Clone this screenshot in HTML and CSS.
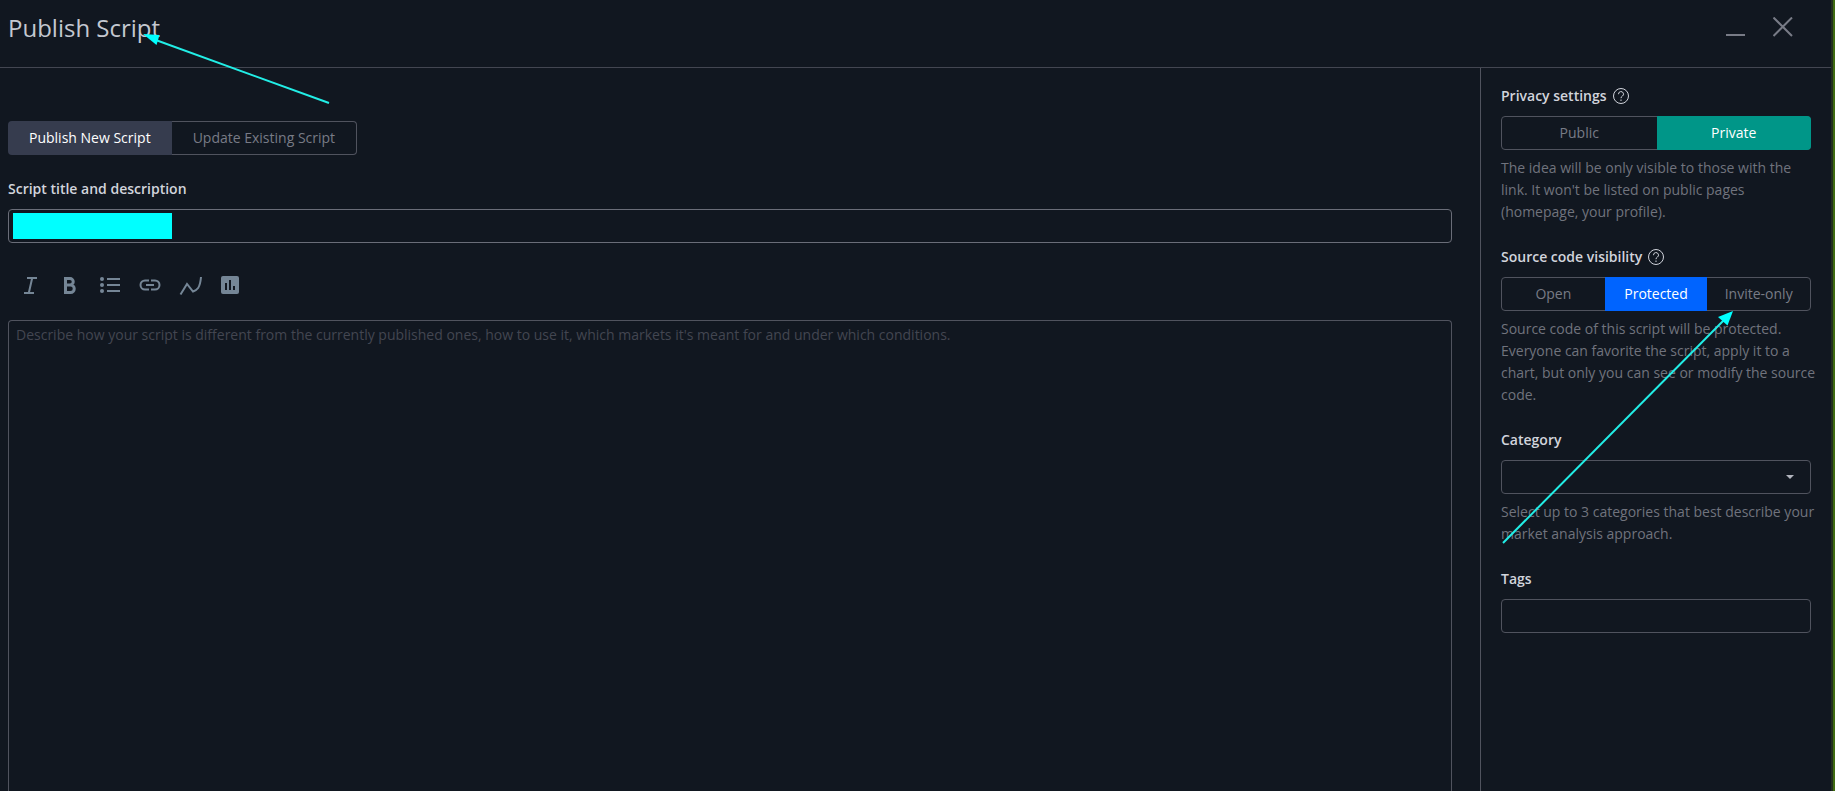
FILE: index.html
```html
<!DOCTYPE html>
<html lang="en">

<head>
	<meta charset="UTF-8" />
	<meta name="viewport" content="width=device-width, initial-scale=1.0" />
	<title>Publish Script</title>
	<link rel="stylesheet" href="styles.css">
</head>

<body>
	<div class="dialog">
		<header class="header">
			<h1 class="title">Publish Script</h1>
			<div class="window-btns">
				<button type="button" aria-label="Minimize">
					<svg width="20" height="20" viewBox="0 0 20 20"><path d="M0 18h19" /></svg>
				</button>
				<button type="button" aria-label="Close">
					<svg width="20" height="20" viewBox="0 0 20 20"><path d="M.5 .5l18.500 18.500M19 .5l-18.500 18.500" /></svg>
				</button>
			</div>
		</header>

		<div class="content">
			<main class="main">
				<div class="tabs">
					<button type="button" class="active">Publish New Script</button>
					<button type="button">Update Existing Script</button>
				</div>

				<label class="label" for="name">Script title and description</label>
				<div class="name">
					<input class="field" type="text" id="name">
					<span class="marker"></span>
				</div>

				<div class="toolbar">
					<button type="button" aria-label="Italic">
						<svg width="24" height="24" viewBox="0 0 24 24"><path d="M9 5h10M6 20h10M14.200 5l-3.400 15" /></svg>
					</button>
					<button type="button" aria-label="Bold">
						<svg width="24" height="24" viewBox="0 0 24 24"><path class="bold" d="M7.500 5.500h4.500a3.200 3.200 0 0 1 0 6.500h-4.500zM7.500 12h5a3.600 3.600 0 0 1 0 7.500h-5z" /></svg>
					</button>
					<button type="button" aria-label="List">
						<svg width="24" height="24" viewBox="0 0 24 24"><path d="M9 6h13M9 12h13M9 18h13" /><g class="fill"><circle cx="4" cy="6" r="2" /><circle cx="4" cy="12" r="2" /><circle cx="4" cy="18" r="2" /></g></svg>
					</button>
					<button type="button" aria-label="Link">
						<svg width="24" height="24" viewBox="0 0 24 24"><path d="M11 7.500H7a4.500 4.500 0 0 0 0 9h4M13 7.500h4a4.500 4.500 0 0 1 0 9h-4M8 12h8" /></svg>
					</button>
					<button type="button" aria-label="Chart">
						<svg width="24" height="24" viewBox="0 0 24 24"><path d="M2.500 21.500l6.500-10.500 6 7.500c4-1.500 7-3 8-14.500" /></svg>
					</button>
					<button type="button" aria-label="Poll">
						<svg width="24" height="24" viewBox="0 0 24 24"><rect class="fill" x="3" y="3" width="18" height="18" rx="2" /><path class="bars" d="M8 10v7M12 7v10M16 13v4" /></svg>
					</button>
				</div>

				<textarea class="field desc" aria-label="Description" placeholder="Describe how your script is different from the currently published ones, how to use it, which markets it's meant for and under which conditions."></textarea>
			</main>

			<aside class="side">
				<section class="group">
					<h2 class="label">Privacy settings
						<svg class="help" width="18" height="18" viewBox="0 0 18 18"><circle cx="9" cy="9" r="7.500" /><path d="M6.500 7.200a2.500 2.500 0 1 1 3.800 2c-.9.600-1.300.9-1.300 2M9 12.500v1.500" /></svg>
					</h2>
					<div class="switch">
						<button type="button">Public</button>
						<button type="button" class="green">Private</button>
					</div>
					<p class="hint">The idea will be only visible to those with the link. It won't be listed on public pages (homepage, your profile).</p>
				</section>

				<section class="group">
					<h2 class="label">Source code visibility
						<svg class="help" width="18" height="18" viewBox="0 0 18 18"><circle cx="9" cy="9" r="7.500" /><path d="M6.500 7.200a2.500 2.500 0 1 1 3.800 2c-.9.600-1.300.9-1.300 2M9 12.500v1.500" /></svg>
					</h2>
					<div class="switch">
						<button type="button">Open</button>
						<button type="button" class="blue">Protected</button>
						<button type="button">Invite-only</button>
					</div>
					<p class="hint">Source code of this script will be protected. Everyone can favorite the script, apply it to a chart, but only you can see or modify the source code.</p>
				</section>

				<section class="group">
					<label class="label" for="category">Category</label>
					<div class="select">
						<select class="field" id="category">
							<option></option>
						</select>
					</div>
					<p class="hint">Select up to 3 categories that best describe your market analysis approach.</p>
				</section>

				<section class="group">
					<label class="label" for="tags">Tags</label>
					<input class="field" type="text" id="tags">
				</section>

				<svg class="arrow arrow-side" width="240" height="240" viewBox="0 0 240 240"><path d="M4 235L226 11" /><path class="head" d="M234 3l-5.500 14.500-9.500-8.500z" /></svg>
			</aside>
		</div>

		<svg class="arrow arrow-title" width="190" height="72" viewBox="0 0 190 72"><path d="M188 70L12 6" /><path class="head" d="M2 1l16.500 1-3 10z" /></svg>
	</div>
</body>

</html>
```

FILE: styles.css
```css
html,
body {
	height: 100%;
}

body {
	margin: 0;
	overflow: hidden;
	background: #3f6b10;
	color: #d1d4dc;
	font: 14px/22px "Open Sans", "Noto Sans", sans-serif;
}

button,
input,
select,
textarea {
	box-sizing: border-box;
	margin: 0;
	padding: 0;
	border: 0;
	background: none;
	color: inherit;
	font: inherit;
}

.dialog {
	position: relative;
	box-sizing: border-box;
	display: flex;
	flex-direction: column;
	height: 100%;
	margin-right: 2px;
	background: #111720;
	border-right: 2px solid #23301f;
}

.header {
	display: flex;
	align-items: center;
	justify-content: space-between;
	height: 67px;
	padding: 0 28px 0 8px;
	border-bottom: 1px solid #434651;
}

.title {
	margin: 0 0 12px;
	font-size: 24px;
	line-height: 28px;
	font-weight: 400;
	color: #c4c8d0;
}

.window-btns {
	display: flex;
	gap: 7px;
	margin-bottom: 13px;
}

.window-btns button {
	width: 40px;
	height: 40px;
}

.window-btns svg {
	display: block;
	margin: auto;
	fill: none;
	stroke: #787b86;
	stroke-width: 2;
}

.content {
	flex: 1;
	display: flex;
	min-height: 0;
}

.main {
	flex: 1;
	display: flex;
	flex-direction: column;
	padding: 53px 28px 0 8px;
}

.tabs {
	display: flex;
}

.tabs button {
	height: 34px;
	padding: 0 21px;
	border: 1px solid #50535e;
	border-left: 0;
	border-radius: 0 4px 4px 0;
	color: #787b86;
}

.tabs .active {
	border: 0;
	border-radius: 4px 0 0 4px;
	background: #363c4e;
	color: #fff;
}

.label {
	display: flex;
	align-items: center;
	gap: 5px;
	margin: 0 0 9px;
	font-size: 14px;
	font-weight: 600;
}

.tabs + .label {
	margin-top: 23px;
}

.field {
	display: block;
	width: 100%;
	height: 34px;
	padding: 0 7px;
	border: 1px solid #50535e;
	border-radius: 4px;
}

.name {
	position: relative;
}

.name .field {
	border-color: #6a6d78;
}

/* covers the script name */
.marker {
	position: absolute;
	top: 4px;
	left: 5px;
	width: 159px;
	height: 26px;
	background: #00ffff;
}

.toolbar {
	display: flex;
	margin: 25px 0 18px 2px;
}

.toolbar button {
	width: 40px;
	height: 34px;
}

.toolbar svg {
	display: block;
	margin: auto;
	fill: none;
	stroke: #758696;
	stroke-width: 2;
}

.toolbar .bold {
	stroke-width: 3;
}

.toolbar .fill {
	fill: #758696;
	stroke: none;
}

.toolbar .bars {
	stroke: #111720;
}

.desc {
	flex: 1;
	padding: 3px 7px;
	border-bottom: 0;
	border-radius: 4px 4px 0 0;
	resize: none;
}

.desc::placeholder {
	color: #434651;
	opacity: 1;
}

.side {
	position: relative;
	box-sizing: border-box;
	width: 351px;
	padding: 17px 20px 0;
	border-left: 1px solid #50535e;
}

.group {
	margin-bottom: 23px;
}

.help {
	fill: none;
	stroke: #d1d4dc;
	stroke-width: 1;
}

.switch {
	display: flex;
	box-sizing: border-box;
	height: 34px;
	border: 1px solid #50535e;
	border-radius: 4px;
}

.switch button {
	flex: 1 1 0;
	color: #787b86;
}

.switch .green,
.switch .blue {
	margin: -1px 0;
	color: #fff;
}

.switch .green {
	margin-right: -1px;
	border-radius: 0 4px 4px 0;
	background: #009688;
}

.switch .blue {
	background: #0064ff;
}

.hint {
	margin: 7px -8px 0 0;
	color: #70737d;
}

.select {
	position: relative;
}

.select select {
	appearance: none;
}

.select::after {
	content: "";
	position: absolute;
	top: 15px;
	right: 17px;
	border: 4px solid transparent;
	border-top-color: #b2b5be;
	border-bottom: 0;
	pointer-events: none;
}

.arrow {
	position: absolute;
	fill: none;
	stroke: #22eee6;
	stroke-width: 2;
	pointer-events: none;
}

.arrow .head {
	fill: #00ffff;
	stroke: none;
}

.arrow-title {
	top: 33px;
	left: 141px;
}

.arrow-side {
	top: 240px;
	right: 92px;
}
```
